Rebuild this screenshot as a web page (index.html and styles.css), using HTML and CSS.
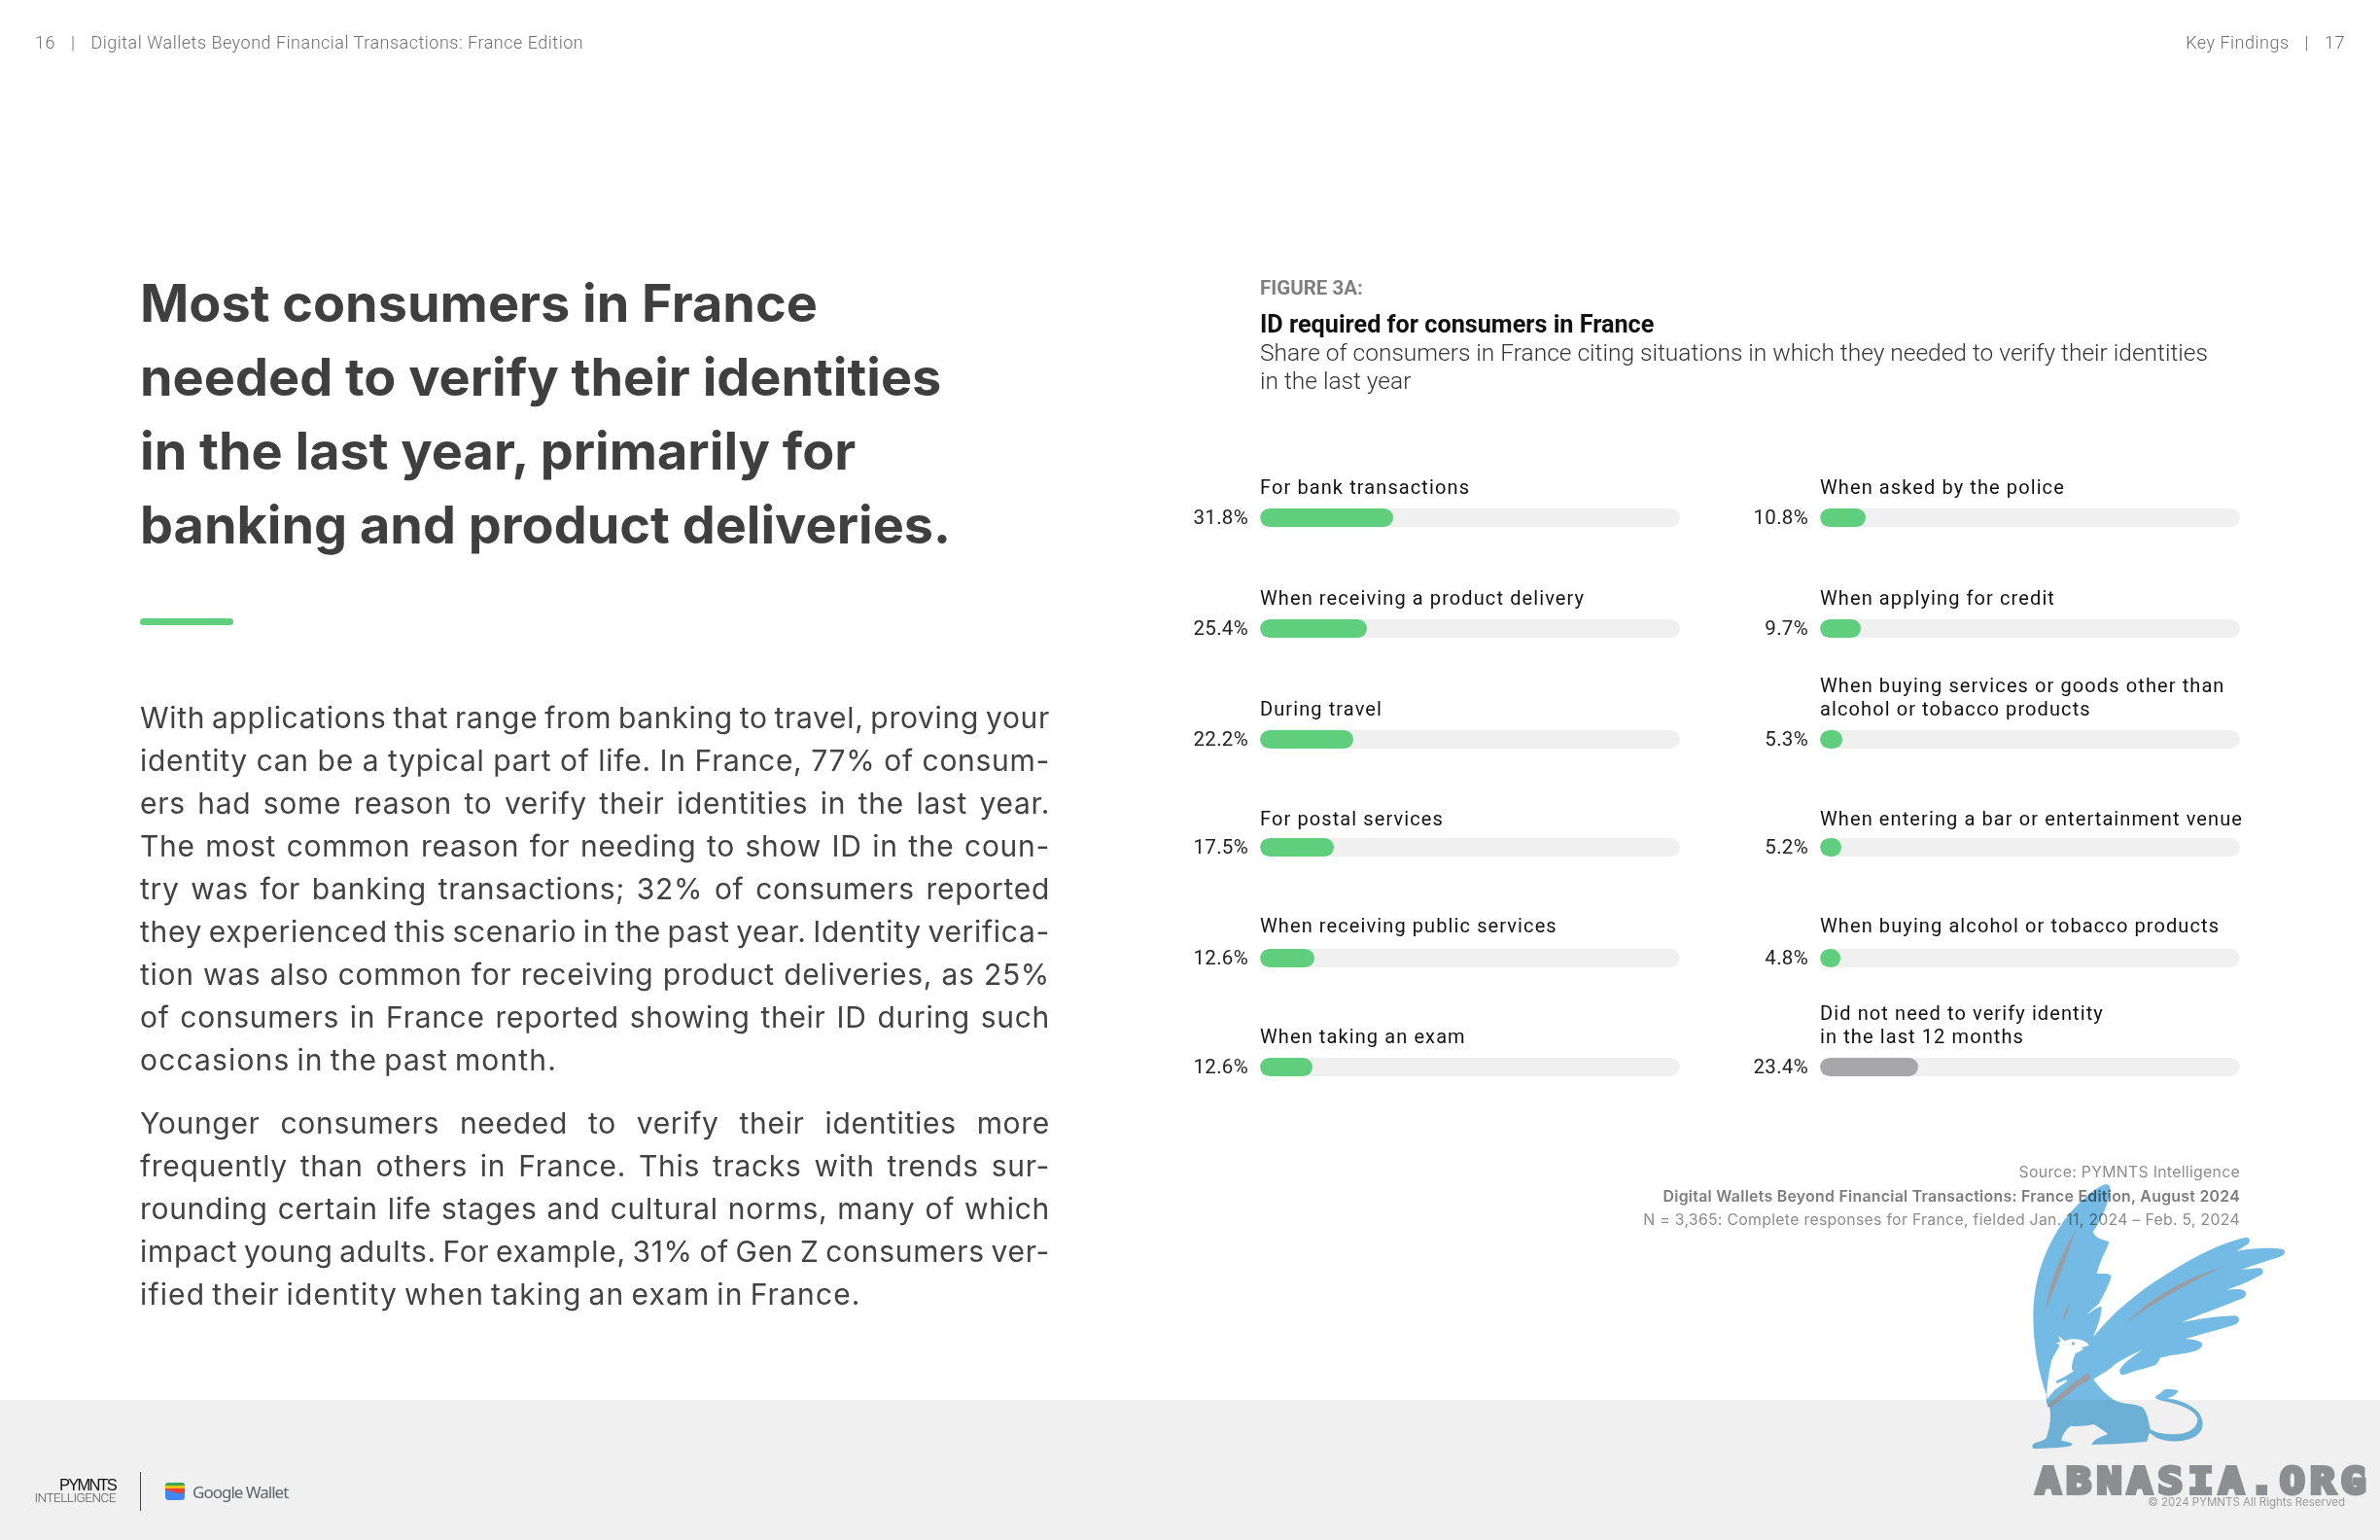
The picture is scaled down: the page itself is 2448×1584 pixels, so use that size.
FILE: index.html
```html
<!DOCTYPE html>
<html lang="en">
<head>
<meta charset="utf-8">
<title>Digital Wallets Beyond Financial Transactions: France Edition</title>
<link rel="stylesheet" href="styles.css">
</head>
<body>
<div class="page">
  <header class="topbar">
    <div class="runner"><span>16</span><span class="pipe">|</span><span>Digital Wallets Beyond Financial Transactions: France Edition</span></div>
    <div class="runner"><span>Key Findings</span><span class="pipe">|</span><span>17</span></div>
  </header>
  <main class="content">
    <section class="article">
      <h1 class="headline">Most consumers in France<br>needed to verify their identities<br>in the last year, primarily for<br>banking and product deliveries.</h1>
      <div class="rule"></div>
      <p class="copy">
        <span class="ln">With applications that range from banking to travel, proving your</span>
        <span class="ln">identity can be a typical part of life. In France, 77% of consum-</span>
        <span class="ln">ers had some reason to verify their identities in the last year.</span>
        <span class="ln">The most common reason for needing to show ID in the coun-</span>
        <span class="ln">try was for banking transactions; 32% of consumers reported</span>
        <span class="ln">they experienced this scenario in the past year. Identity verifica-</span>
        <span class="ln">tion was also common for receiving product deliveries, as 25%</span>
        <span class="ln">of consumers in France reported showing their ID during such</span>
        <span class="ln end">occasions in the past month.</span>
      </p>
      <p class="copy">
        <span class="ln">Younger consumers needed to verify their identities more</span>
        <span class="ln">frequently than others in France. This tracks with trends sur-</span>
        <span class="ln">rounding certain life stages and cultural norms, many of which</span>
        <span class="ln">impact young adults. For example, 31% of Gen Z consumers ver-</span>
        <span class="ln end">ified their identity when taking an exam in France.</span>
      </p>
    </section>
    <section class="figure">
      <div class="figure-head">
        <div class="fig-no">FIGURE 3A:</div>
        <h2 class="fig-title">ID required for consumers in France</h2>
        <p class="fig-sub">Share of consumers in France citing situations in which they needed to verify their identities<br>in the last year</p>
      </div>
      <div class="chart">
        <div class="item"><div class="label">For bank transactions</div><div class="pct">31.8%</div><div class="track"><div class="fill" style="width:31.8%"></div></div></div>
        <div class="item"><div class="label">When asked by the police</div><div class="pct">10.8%</div><div class="track"><div class="fill" style="width:10.8%"></div></div></div>
        <div class="item"><div class="label">When receiving a product delivery</div><div class="pct">25.4%</div><div class="track"><div class="fill" style="width:25.4%"></div></div></div>
        <div class="item"><div class="label">When applying for credit</div><div class="pct">9.7%</div><div class="track"><div class="fill" style="width:9.7%"></div></div></div>
        <div class="item"><div class="label">During travel</div><div class="pct">22.2%</div><div class="track"><div class="fill" style="width:22.2%"></div></div></div>
        <div class="item"><div class="label">When buying services or goods other than<br>alcohol or tobacco products</div><div class="pct">5.3%</div><div class="track"><div class="fill" style="width:5.3%"></div></div></div>
        <div class="item tight"><div class="label">For postal services</div><div class="pct">17.5%</div><div class="track"><div class="fill" style="width:17.5%"></div></div></div>
        <div class="item tight"><div class="label">When entering a bar or entertainment venue</div><div class="pct">5.2%</div><div class="track"><div class="fill" style="width:5.2%"></div></div></div>
        <div class="item loose"><div class="label">When receiving public services</div><div class="pct">12.6%</div><div class="track"><div class="fill" style="width:12.9%"></div></div></div>
        <div class="item loose"><div class="label">When buying alcohol or tobacco products</div><div class="pct">4.8%</div><div class="track"><div class="fill" style="width:4.8%"></div></div></div>
        <div class="item"><div class="label">When taking an exam</div><div class="pct">12.6%</div><div class="track"><div class="fill" style="width:12.6%"></div></div></div>
        <div class="item"><div class="label">Did not need to verify identity<br>in the last 12 months</div><div class="pct">23.4%</div><div class="track"><div class="fill grey" style="width:23.4%"></div></div></div>
      </div>
      <div class="source">
        <div>Source: PYMNTS Intelligence</div>
        <div class="strong">Digital Wallets Beyond Financial Transactions: France Edition, August 2024</div>
        <div>N = 3,365: Complete responses for France, fielded Jan. 11, 2024 – Feb. 5, 2024</div>
      </div>
    </section>
  </main>
  <footer class="footer">
    <div class="logos">
      <div class="pymnts"><span class="pm">PYMNTS</span><span class="intel">INTELLIGENCE</span></div>
      <div class="divider"></div>
      <div class="gwallet">
        <svg class="wallet-icon" viewBox="0 0 20 18" aria-hidden="true">
          <defs><clipPath id="wc"><rect width="20" height="18" rx="3.5"/></clipPath></defs>
          <g clip-path="url(#wc)">
            <rect width="20" height="18" fill="#4285f4"/>
            <rect width="20" height="4" fill="#34a853"/>
            <rect y="3" width="20" height="4" fill="#fbbc04"/>
            <path d="M0 6H20V10.500C16 10.500 14 11.500 11 10.500C7 9.500 4 7.500 0 7.500Z" fill="#ea4335"/>
          </g>
        </svg>
        <span class="gw-text">Google Wallet</span>
      </div>
    </div>
    <div class="copyright">© 2024 PYMNTS All Rights Reserved</div>
  </footer>
  <svg class="griffin" viewBox="0 0 1224 1212" aria-hidden="true">
    <path class="gf-blue" d="M195 765C165 680 150 580 155 490C160 400 190 310 250 225C290 175 335 130 375 115C395 112 395 130 385 165C372 205 355 235 338 262C350 285 372 285 388 292C385 310 365 335 350 390C365 392 390 385 395 400C385 430 370 460 355 485C340 495 325 510 318 518C335 505 355 490 365 492C365 525 350 555 340 585C390 520 470 450 560 395C640 345 730 295 810 278C825 278 825 292 815 300L782 320C830 312 890 308 925 315C935 322 930 332 915 338C880 350 835 362 797 378C825 376 850 370 860 375C868 385 860 395 845 400C815 418 780 430 750 440C775 438 800 436 808 445C815 458 805 466 785 472C730 495 670 515 612 540C670 530 730 520 780 520C795 528 790 542 775 548C730 562 670 578 622 592C640 592 665 595 675 605C678 620 660 628 640 632C610 640 575 640 545 650C540 665 535 672 520 676C490 686 460 692 432 703C420 702 417 690 425 680C440 660 465 645 490 625C460 640 415 660 395 680C375 695 355 705 340 716C360 745 385 772 415 785C445 795 470 790 490 802C505 815 510 845 515 870C530 880 560 888 600 885C640 882 665 860 660 835C650 810 610 795 565 785C550 782 535 780 530 772C535 762 550 760 555 750C565 744 585 745 602 752C595 762 585 770 565 775C600 778 645 795 665 820C685 850 680 880 645 897C610 912 565 910 535 897C525 890 518 885 512 882L505 908C450 915 395 915 335 918C338 905 350 898 385 885C365 870 350 860 340 855C320 860 290 862 270 860C255 870 245 885 240 905C255 908 272 910 275 917C270 925 240 927 155 930C148 925 150 918 160 912C175 908 190 905 195 895C205 865 210 835 205 805C195 795 192 780 195 765Z"/>
    <path class="gf-white" d="M232 582L250 598C265 590 295 590 310 598C318 602 325 607 326 612L300 618L310 621C305 628 295 632 285 635C278 650 272 670 273 685L279 691L255 706L223 722L228 729L256 717L258 723L222 748L197 776C195 750 197 720 210 660C215 645 228 628 236 610L225 605L238 600Z"/>
    <circle class="gf-eye" cx="277" cy="606" r="5"/>
    <path class="gf-grey" d="M192 505C198 440 225 360 285 255C262 330 225 420 192 505Z"/>
    <path class="gf-grey" d="M246 535C247 515 255 495 266 482C265 500 258 520 246 535Z"/>
    <path class="gf-grey" d="M445 540C500 480 600 410 740 370C650 410 540 470 445 540Z"/>
    <path class="gf-grey" d="M198 802L200 795L250 750L280 725L320 698C330 698 333 702 330 710C325 720 310 730 290 738L260 765L210 800Z"/>
  </svg>
  <div class="stamp">ABNASIA.ORG</div>
</div>
</body>
</html>
```
FILE: styles.css
```css
* { box-sizing: border-box; margin: 0; padding: 0; }
html, body { width: 2448px; height: 1584px; background: #fff; overflow: hidden; }
.page { position: relative; width: 2448px; height: 1584px; display: flex; flex-direction: column; font-family: "Inter", "Liberation Sans", sans-serif; }

.topbar { height: 88px; padding: 32px 36px 0; display: flex; justify-content: space-between; }
.runner { display: flex; gap: 16px; font-family: "Roboto", "Liberation Sans", sans-serif; font-weight: 300; font-size: 18px; line-height: 24px; letter-spacing: .5px; color: #6f6f6f; }

.content { flex: 1; display: flex; padding-left: 144px; }
.article { width: 936px; padding-top: 186px; }
.headline { font-family: "Inter", sans-serif; font-weight: 700; font-size: 54px; line-height: 76px; color: #3f3f3f; }
.rule { width: 96px; height: 7px; margin-top: 58px; border-radius: 4px; background: #5fcf7d; }
.copy { margin-top: 21px; font-size: 30px; line-height: 44px; color: #424242; letter-spacing: .7px; word-spacing: -2.600px; }
.rule + .copy { margin-top: 73px; }
.ln { display: block; text-align: justify; text-align-last: justify; white-space: nowrap; }
.ln.end { text-align-last: left; letter-spacing: 1.150px; }

.figure { width: 1084px; margin-left: 140px; padding-top: 196px; }
.figure-head { padding-left: 76px; }
.fig-no { font-family: "Roboto", sans-serif; font-weight: 700; font-size: 20.500px; line-height: 24px; color: #7f7f7f; }
.fig-title { margin-top: 11px; font-family: "Roboto", sans-serif; font-weight: 700; font-size: 25.200px; line-height: 29px; color: #111; }
.fig-sub { font-family: "Roboto", sans-serif; font-weight: 300; font-size: 24.500px; line-height: 29px; color: #333; width: 1000px; }

.chart { margin-top: 82px; width: 1084px; display: grid; grid-template-columns: 508px 508px; column-gap: 68px; grid-template-rows: 54px 114px 114px 111px 114px 112px; align-items: end; }
.item { display: grid; grid-template-columns: 64px 432px; column-gap: 12px; align-items: center; row-gap: 9px; }
.item.tight { row-gap: 7px; }
.item.loose { row-gap: 11px; }
.label { grid-column: 2; white-space: nowrap; font-family: "Roboto", sans-serif; font-size: 20px; line-height: 24px; letter-spacing: 1.100px; color: #111; }
.pct { grid-column: 1; text-align: right; font-family: "Roboto", sans-serif; font-size: 20.500px; line-height: 20px; letter-spacing: .3px; color: #222; }
.track { grid-column: 2; height: 19px; border-radius: 10px; background: #f0f0f0; overflow: hidden; }
.fill { height: 100%; border-radius: 10px; background: #5fcf7d; }
.fill.grey { background: #a7a7ab; }

.source { margin-top: 87px; text-align: right; font-size: 15.800px; line-height: 24.500px; color: #8c8c8c; letter-spacing: .3px; }
.source .strong { font-weight: 600; color: #7c7c7c; }

.footer { height: 144px; background: #f0f0f0; padding: 74px 36px 0; display: flex; justify-content: space-between; align-items: flex-start; }
.logos { display: flex; align-items: center; height: 40px; }
.pymnts { width: 83px; display: flex; flex-direction: column; align-items: flex-end; font-family: "Liberation Sans", sans-serif; line-height: 13px; }
.pm { font-size: 16.500px; letter-spacing: -1.800px; color: #111; }
.intel { font-family: "Roboto", sans-serif; font-weight: 300; font-size: 13.500px; letter-spacing: -.5px; color: #555; }
.divider { width: 1px; height: 40px; margin-left: 25px; background: #444; }
.gwallet { margin-left: 25px; display: flex; align-items: center; gap: 8px; }
.wallet-icon { width: 20px; height: 18px; display: block; }
.gw-text { font-family: "Noto Sans", sans-serif; font-size: 17px; letter-spacing: -1px; color: #5f6368; }
.copyright { margin-top: 23px; font-family: "Inter", sans-serif; font-size: 11.500px; line-height: 16px; color: #9a9a9a; }

.griffin { position: absolute; left: 2040px; top: 1180px; width: 408px; height: 404px; mix-blend-mode: multiply; }
.gf-blue { fill: #73bbe4; }
.gf-white { fill: #fff; }
.gf-eye { fill: #73bbe4; }
.gf-grey { fill: #9a9da3; }
.stamp { position: absolute; left: 2094px; top: 1499px; font-family: "DejaVu Sans Mono", monospace; font-weight: 700; font-size: 37px; line-height: 50px; letter-spacing: 5px; color: #8d8e91; -webkit-text-stroke: 4px #8d8e91; white-space: nowrap; transform: scaleX(1.15); transform-origin: left top; text-shadow: 0 0 2px #d8d8da; }
```
